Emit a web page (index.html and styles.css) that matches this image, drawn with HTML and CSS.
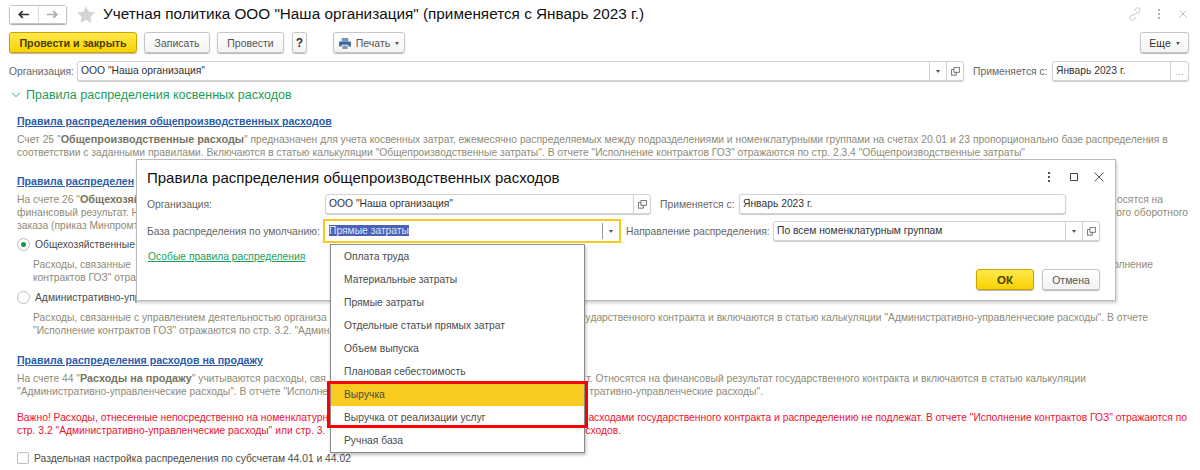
FILE: index.html
```html
<!DOCTYPE html>
<html lang="ru">
<head>
    <meta charset="UTF-8">
    <title>Учетная политика</title>
    <link rel="stylesheet" href="styles.css">
</head>
<body>
<div class="page">

    <!-- Title bar -->
    <div class="title-bar">
        <div class="nav-group">
            <button class="nav-btn">
                <svg width="12" height="9" viewBox="0 0 14 10"><path d="M1 5h12M5.500 1L1.500 5l4 4" fill="none" stroke="#333" stroke-width="2"/></svg>
            </button>
            <button class="nav-btn">
                <svg width="12" height="9" viewBox="0 0 14 10"><path d="M1 5h12M8.500 1l4 4-4 4" fill="none" stroke="#aaa" stroke-width="2"/></svg>
            </button>
        </div>
        <svg class="star" width="18" height="17" viewBox="0 0 20 19"><path d="M10 0l3 6.500 7 .8-5.200 4.800 1.400 6.900L10 15.500 3.800 19l1.400-6.900L0 7.300l7-.8z" fill="#d4d4d4"/></svg>
        <h1 class="page-title">Учетная политика ООО "Наша организация" (применяется с Январь 2023 г.)</h1>
        <div class="window-icons">
            <svg width="14" height="14" viewBox="0 0 14 14"><path d="M6 4l2-2.500a2.200 2.200 0 0 1 3.500 3L9 7.500M8 10l-2 2.500a2.200 2.200 0 0 1-3.500-3L5 6.500M5 9l4-4" fill="none" stroke="#c4c4c4" stroke-width="1"/></svg>
            <svg width="14" height="14" viewBox="0 0 14 14"><path d="M7 2v2M7 6v2M7 10v2" stroke="#b0b0b0" stroke-width="2"/></svg>
            <svg width="14" height="14" viewBox="0 0 14 14"><path d="M3.500 3.500l7 7M10.500 3.500l-7 7" stroke="#bbb" stroke-width="1"/></svg>
        </div>
    </div>

    <!-- Command bar -->
    <div class="command-bar">
        <button class="btn btn-primary btn-wide">Провести и закрыть</button>
        <button class="btn btn-save">Записать</button>
        <button class="btn btn-post">Провести</button>
        <button class="btn btn-help">?</button>
        <button class="btn btn-print">
            <svg width="12" height="11" viewBox="0 0 14 13"><path d="M3 0h8v4H3z" fill="#7a96b5"/><path d="M0 4h14v6h-3V8H3v2H0z" fill="#3f6a96"/><path d="M4 9h6v4H4z" fill="#7a96b5"/></svg>
            Печать <span class="caret"></span>
        </button>
        <button class="btn btn-more">Еще <span class="caret"></span></button>
    </div>

    <!-- Organization row -->
    <div class="org-row">
        <span class="label label-org">Организация:</span>
        <div class="field field-org">
            <span class="field-value">ООО "Наша организация"</span>
            <span class="field-btn"><span class="caret"></span></span>
            <span class="field-btn"><svg width="9" height="9" viewBox="0 0 11 11"><path d="M3.500 .5h7v6h-7zM3.500 3H.5v7h6V6.500" fill="none" stroke="#555"/></svg></span>
        </div>
        <span class="label label-applies">Применяется с:</span>
        <div class="field field-date">
            <span class="field-value">Январь 2023 г.</span>
            <span class="field-btn dots">...</span>
        </div>
    </div>

    <!-- Group heading -->
    <div class="group-head">
        <svg width="10" height="6" viewBox="0 0 11 7"><path d="M1 1l4.500 4.500L10 1" fill="none" stroke="#1a9c5b" stroke-width="1"/></svg>
        Правила распределения косвенных расходов
    </div>

    <!-- Page content, mostly under the dialog -->
    <div class="content">
        <a class="rule-link" href="#">Правила распределения общепроизводственных расходов</a>
        <p class="note note-first">Счет 25 "<b>Общепроизводственные расходы</b>" предназначен для учета косвенных затрат, ежемесячно распределяемых между подразделениями и номенклатурными группами на счетах 20.01 и 23 пропорционально базе распределения в<br>соответствии с заданными правилами. Включаются в статью калькуляции "Общепроизводственные затраты". В отчете "Исполнение контрактов ГОЗ" отражаются по стр. 2.3.4 "Общепроизводственные затраты"</p>

        <a class="rule-link link-second" href="#">Правила распределен</a>
        <p class="note note-split">
            <span class="split split-a"><span>На счете 26 "<b>Общехозяй</b></span><span>осятся на</span></span>
            <span class="split split-b"><span>финансовый результат. Н</span><span>ого оборотного</span></span>
            <span class="split"><span>заказа (приказ Минпромт</span></span>
        </p>
        <label class="radio-row"><span class="radio radio-on"></span>Общехозяйственные</label>
        <p class="note note-sub">
            <span class="split split-c"><span>Расходы, связанные</span><span>олнение</span></span>
            <span class="split"><span>контрактов ГОЗ" отра</span></span>
        </p>
        <label class="radio-row radio-row-second"><span class="radio"></span>Административно-упр</label>
        <p class="note note-sub">
            <span class="split split-h"><span>Расходы, связанные с управлением деятельностью организа</span><span>ударственного контракта и включаются в статью калькуляции "Административно-управленческие расходы". В отчете</span></span>
            <span class="split"><span>"Исполнение контрактов ГОЗ" отражаются по стр. 3.2. "Админ</span></span>
        </p>

        <a class="rule-link link-third" href="#">Правила распределения расходов на продажу</a>
        <p class="note note-sales">
            <span class="split split-d"><span>На счете 44 "<b>Расходы на продажу</b>" учитываются расходы, свя</span><span>т. Относятся на финансовый результат государственного контракта и включаются в статью калькуляции</span></span>
            <span class="split split-e"><span>"Административно-управленческие расходы". В отчете "Исполне</span><span>тративно-управленческие расходы".</span></span>
        </p>
        <p class="note warn">
            <span class="split split-f"><span>Важно! Расходы, отнесенные непосредственно на номенклатурн</span><span>асходами государственного контракта и распределению не подлежат. В отчете "Исполнение контрактов ГОЗ" отражаются по</span></span>
            <span class="split split-g"><span>стр. 3.2 "Административно-управленческие расходы" или стр. 3.</span><span>сходов.</span></span>
        </p>
        <label class="check-row"><span class="checkbox"></span>Раздельная настройка распределения по субсчетам 44.01 и 44.02</label>
    </div>

    <!-- Modal dialog -->
    <div class="dialog">
        <div class="dialog-head">
            <h2 class="dialog-title">Правила распределения общепроизводственных расходов</h2>
            <div class="dialog-icons">
                <svg width="14" height="14" viewBox="0 0 14 14"><path d="M7 2v2M7 6v2M7 10v2" stroke="#555" stroke-width="2"/></svg>
                <svg width="14" height="14" viewBox="0 0 14 14"><path d="M3.500 3.500h7v7h-7z" fill="none" stroke="#444" stroke-width="1"/></svg>
                <svg width="14" height="14" viewBox="0 0 14 14"><path d="M2.500 2.500l9 9M11.500 2.500l-9 9" stroke="#555" stroke-width="1"/></svg>
            </div>
        </div>
        <div class="dlg-row dlg-row-org">
            <span class="label dlg-label">Организация:</span>
            <div class="field dlg-org">
                <span class="field-value">ООО "Наша организация"</span>
                <span class="field-btn"><svg width="9" height="9" viewBox="0 0 11 11"><path d="M3.500 .5h7v6h-7zM3.500 3H.5v7h6V6.500" fill="none" stroke="#555"/></svg></span>
            </div>
            <span class="label dlg-applies">Применяется с:</span>
            <div class="field dlg-date"><span class="field-value">Январь 2023 г.</span></div>
        </div>
        <div class="dlg-row dlg-row-base">
            <span class="label dlg-label">База распределения по умолчанию:</span>
            <div class="field dlg-base">
                <span class="field-value"><span class="selected">Прямые затраты</span></span>
                <span class="field-btn"><span class="caret"></span></span>
            </div>
            <span class="label dlg-direction-label">Направление распределения:</span>
            <div class="field dlg-direction">
                <span class="field-value">По всем номенклатурным группам</span>
                <span class="field-btn"><span class="caret"></span></span>
                <span class="field-btn"><svg width="9" height="9" viewBox="0 0 11 11"><path d="M3.500 .5h7v6h-7zM3.500 3H.5v7h6V6.500" fill="none" stroke="#555"/></svg></span>
            </div>
        </div>
        <a class="special-link" href="#">Особые правила распределения</a>
        <div class="dialog-foot">
            <button class="btn btn-primary btn-ok">ОК</button>
            <button class="btn btn-cancel">Отмена</button>
        </div>
    </div>

    <!-- Dropdown list -->
    <ul class="dropdown">
        <li>Оплата труда</li>
        <li>Материальные затраты</li>
        <li>Прямые затраты</li>
        <li>Отдельные статьи прямых затрат</li>
        <li>Объем выпуска</li>
        <li>Плановая себестоимость</li>
        <li class="active">Выручка</li>
        <li>Выручка от реализации услуг</li>
        <li>Ручная база</li>
    </ul>
    <div class="red-frame"></div>
</div>
</body>
</html>
```

FILE: styles.css
```css
/* Base */
* {
    box-sizing: border-box;
}

html, body {
    margin: 0;
    height: 470px;
    overflow: hidden;
    background: #fff;
}

body {
    font-family: "Liberation Sans", Arial, sans-serif;
    font-size: 10.3px;
    color: #4b4b4b;
}

.page {
    position: relative;
    width: 1200px;
    height: 470px;
    overflow: hidden;
}

p {
    margin: 0;
}

/* Title bar */
.title-bar {
    display: flex;
    align-items: center;
    height: 20px;
    margin-top: 4px;
    padding: 0 10px 0 9px;
}

.nav-group {
    display: flex;
    width: 58px;
    height: 19px;
    border: 1px solid #c4c4c4;
    border-radius: 3px;
    box-shadow: 0 1px 1px #aaa;
}

.nav-btn {
    flex: 1;
    padding: 0;
    border: none;
    background: #fff;
}

.nav-btn + .nav-btn {
    border-left: 1px solid #d8d8d8;
}

.star {
    margin-left: 10px;
}

.page-title {
    margin: 0 0 0 8px;
    font-size: 15.300px;
    font-weight: 400;
    color: #111;
    white-space: nowrap;
}

.window-icons {
    display: flex;
    gap: 10px;
    margin-left: auto;
}

/* Buttons */
.btn {
    height: 21px;
    padding: 0;
    border: 1px solid #c6c6c6;
    border-radius: 3px;
    background: linear-gradient(#fff, #f3f3f3);
    box-shadow: 0 1px 1px #b5b5b5;
    font-family: inherit;
    font-size: 10.500px;
    color: #555;
    white-space: nowrap;
}

.btn-primary {
    border-color: #c9a400;
    background: linear-gradient(#ffe94d, #f8d200);
    color: #4a4000;
    font-weight: 700;
}

.caret {
    display: inline-block;
    width: 0;
    height: 0;
    margin-left: 2px;
    vertical-align: 2px;
    border-top: 3px solid #555;
    border-left: 2.500px solid transparent;
    border-right: 2.500px solid transparent;
}

/* Command bar */
.command-bar {
    display: flex;
    align-items: center;
    height: 21px;
    margin-top: 8px;
    padding: 0 11px 0 9px;
    gap: 7px;
}

.btn-wide { width: 128px; font-size: 10.700px; }
.btn-save { width: 66px; }
.btn-post { width: 67px; }
.btn-help { width: 15px; margin-left: 1px; font-size: 12px; font-weight: 700; color: #333; }
.btn-print { width: 72px; margin-left: 19px; }
.btn-more { width: 49px; margin-left: auto; color: #333; }

.btn-print svg {
    vertical-align: -2px;
    margin-right: 2px;
}

/* Fields */
.field {
    display: flex;
    align-items: stretch;
    height: 20px;
    border: 1px solid #d2d2d2;
    border-radius: 3px;
    background: #fff;
    box-shadow: 0 1px 1px #ccc;
    color: #333;
}

.field-value {
    flex: 1;
    padding-left: 3px;
    line-height: 18px;
    white-space: nowrap;
    overflow: hidden;
}

.field-btn {
    display: flex;
    align-items: center;
    justify-content: center;
    width: 17px;
    border-left: 1px solid #d2d2d2;
}

.field-btn .caret {
    margin: 0;
}

.label {
    color: #666;
    white-space: nowrap;
}

.dots {
    width: 18px;
    color: #aaa;
}

/* Organization row */
.org-row {
    display: flex;
    align-items: center;
    height: 20px;
    margin-top: 8px;
    padding-left: 9px;
}

.label-org {
    width: 68px;
}

.field-org {
    width: 887px;
}

.label-applies {
    width: 79px;
    margin-left: 9px;
}

.field-date {
    width: 137px;
}

/* Group heading */
.group-head {
    display: flex;
    align-items: center;
    gap: 5px;
    height: 20px;
    margin-top: 4px;
    padding-left: 11px;
    font-size: 12.500px;
    color: #1a9c5b;
    white-space: nowrap;
}

/* Content behind the dialog */
.content {
    padding: 0 10px 0 17px;
}

.rule-link {
    display: block;
    height: 13px;
    margin-top: 10px;
    font-size: 10.600px;
    font-weight: 700;
    line-height: 13px;
    color: #2a5caa;
    white-space: nowrap;
}

.link-second { margin-top: 16px; }
.link-third { margin-top: 17px; }

.note {
    margin-top: 5px;
    line-height: 13px;
    color: #8e8b78;
    white-space: nowrap;
}

.note b {
    font-size: 10.800px;
    color: #77745f;
}

.note-sub {
    margin-top: 6px;
    padding-left: 16px;
}

.split {
    display: flex;
    justify-content: space-between;
}

/* each line ends where its visible part ends, the middle is under the dialog */
.split-a { width: 1146px; }
.split-b { width: 1171px; }
.split-c { width: 1120px; }
.split-d { width: 1069px; }
.split-e { width: 746px; }
.split-f { width: 1170px; }
.split-g { width: 604px; }
.split-h { width: 1115px; }

.radio-row {
    display: flex;
    align-items: center;
    gap: 5px;
    height: 16px;
    margin-top: 4px;
    color: #4b4b4b;
    white-space: nowrap;
}

.radio-row-second {
    margin-top: 5px;
}

.radio {
    display: flex;
    align-items: center;
    justify-content: center;
    width: 13px;
    height: 13px;
    border: 1px solid #bbb;
    border-radius: 50%;
    background: #fff;
}

.radio-on::after {
    content: "";
    width: 5px;
    height: 5px;
    border-radius: 50%;
    background: #129a50;
}

.warn {
    margin-top: 13px;
    color: #f01030;
}

.check-row {
    display: flex;
    align-items: center;
    gap: 5px;
    height: 16px;
    margin-top: 13px;
    color: #4b4b4b;
    white-space: nowrap;
}

.checkbox {
    width: 12px;
    height: 12px;
    border: 1px solid #bbb;
    border-radius: 2px;
}

/* Dialog */
.dialog {
    position: absolute;
    left: 136px;
    top: 159px;
    width: 980px;
    height: 142px;
    padding: 0 10px;
    border: 1px solid #bbb;
    background: #fff;
    box-shadow: 1px 2px 3px rgba(0, 0, 0, .2);
}

.dialog-head {
    display: flex;
    align-items: center;
    justify-content: space-between;
    height: 32px;
    padding-top: 2px;
}

.dialog-title {
    margin: 0;
    font-size: 15px;
    font-weight: 400;
    color: #111;
    white-space: nowrap;
}

.dialog-icons {
    display: flex;
    gap: 11px;
    margin-right: -1px;
}

.dlg-row {
    display: flex;
    align-items: center;
}

.dlg-row-org {
    height: 20px;
    margin-top: 2px;
}

.dlg-row-base {
    height: 24px;
    margin-top: 5px;
}

.dlg-label {
    width: 178px;
}

.dlg-org {
    width: 326px;
}

.dlg-applies {
    width: 79px;
    margin-left: 9px;
}

.dlg-date {
    width: 327px;
}

.dlg-base {
    flex: none;
    width: 298px;
    height: 24px;
    margin-left: -2px;
    border: 2px solid #f6c91a;
    border-radius: 0;
    box-shadow: none;
}

.dlg-base .field-value {
    padding-left: 4px;
    line-height: 20px;
}

.dlg-base .field-btn {
    margin: 2px 0;
    width: 17px;
    border-left-color: #999;
}

.selected {
    background: #4b62b8;
    color: #dfe6f7;
}

.dlg-direction-label {
    width: 147px;
    margin-left: 5px;
}

.dlg-direction {
    width: 327px;
}

.special-link {
    display: block;
    margin-top: 7px;
    padding-left: 1px;
    line-height: 13px;
    color: #1aa05a;
    white-space: nowrap;
}

.dialog-foot {
    position: absolute;
    right: 15px;
    bottom: 10px;
    display: flex;
    gap: 8px;
}

.btn-ok {
    width: 58px;
    font-size: 11.500px;
}

.btn-cancel {
    width: 58px;
}

/* Dropdown */
.dropdown {
    position: absolute;
    left: 330px;
    top: 244px;
    width: 255px;
    height: 209px;
    margin: 0;
    padding: 0;
    list-style: none;
    border: 1px solid #8a8a8a;
    background: #fff;
    box-shadow: 1px 2px 3px rgba(0, 0, 0, .25);
}

.dropdown li {
    height: 23px;
    padding-left: 13px;
    line-height: 23px;
    white-space: nowrap;
    color: #4b4b4b;
}

.dropdown .active {
    background: #f9cb1f;
}

.red-frame {
    position: absolute;
    left: 327px;
    top: 381px;
    width: 261px;
    height: 47px;
    border: 3px solid #ff0000;
}
```
